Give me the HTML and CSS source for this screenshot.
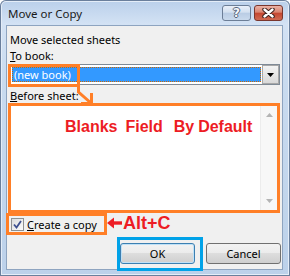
FILE: index.html
```html
<!DOCTYPE html>
<html lang="en">
<head>
    <meta charset="UTF-8">
    <title>Move or Copy</title>
    <link rel="stylesheet" href="styles.css">
</head>
<body>

<div class="window">
    <div class="titlebar">
        <span class="title">Move or Copy</span>
        <div class="caption-buttons">
            <span class="cap-btn help">?</span>
            <span class="cap-btn close">
                <svg width="13" height="10" viewBox="0 0 13 10">
                    <path d="M2.5 1.5 L10.5 8.5 M10.5 1.5 L2.5 8.5" stroke="#3a1f1b" stroke-width="4.4" stroke-linecap="round"/>
                    <path d="M2.5 1.5 L10.5 8.5 M10.5 1.5 L2.5 8.5" stroke="#ffffff" stroke-width="2.4" stroke-linecap="round"/>
                </svg>
            </span>
        </div>
    </div>

    <div class="client">
        <p class="label first">Move selected sheets</p>
        <p class="label"><u>T</u>o book:</p>

        <div class="combo">
            <div class="combo-value">
                <span class="selected">(new book)</span>
            </div>
            <div class="combo-arrow">
                <svg width="7" height="4" viewBox="0 0 7 4"><path d="M0 0 H7 L3.5 4 Z" fill="#000"/></svg>
            </div>
        </div>

        <p class="label before"><u>B</u>efore sheet:</p>

        <div class="listbox">
            <div class="list-items">
                <p class="note">Blanks <span class="w2">Field</span> <span class="w3">By</span> <span class="w4">Default</span></p>
            </div>
            <div class="scrollbar">
                <svg width="7" height="4" viewBox="0 0 7 4"><path d="M0 4 H7 L3.5 0 Z" fill="#b4b4b4"/></svg>
                <svg width="7" height="4" viewBox="0 0 7 4"><path d="M0 0 H7 L3.5 4 Z" fill="#b4b4b4"/></svg>
            </div>
        </div>

        <div class="check-row">
            <span class="checkbox">
                <svg width="11" height="11" viewBox="0 0 11 11">
                    <path d="M2 5.5 L4.5 8.5 L9 2" fill="none" stroke="#3d4f8f" stroke-width="1.8"/>
                </svg>
            </span>
            <span><u>C</u>reate a copy</span>
        </div>

        <div class="buttons">
            <button class="btn default">OK</button>
            <button class="btn">Cancel</button>
        </div>
    </div>

    <!-- annotations drawn over the dialog -->
    <div class="mark mark-book"></div>
    <svg class="mark-arrow" width="30" height="26" viewBox="70 84 30 26">
        <polyline points="78.5,86 78.5,92 91.5,103.5" fill="none" stroke="#ff7f27" stroke-width="3"/>
        <polyline points="91.5,93 91.5,103.5 81,103.5" fill="none" stroke="#ff7f27" stroke-width="3"/>
    </svg>
    <div class="mark mark-check"></div>
    <svg class="red-arrow" width="16" height="12" viewBox="0 0 16 12">
        <path d="M0 6 L7 0.5 V11.5 Z" fill="#ed1c24"/>
        <path d="M5 6 H15" stroke="#ed1c24" stroke-width="3.4"/>
    </svg>
    <span class="shortcut">Alt+C</span>
    <div class="mark-ok"></div>
</div>

</body>
</html>
```

FILE: styles.css
```css
body {
    margin: 0;
    font-family: "Noto Sans", "Liberation Sans", sans-serif;
    font-size: 11px;
    color: #000;
}

.window {
    position: relative;
    width: 290px;
    height: 276px;
    box-sizing: border-box;
    display: flex;
    flex-direction: column;
    background: linear-gradient(#b9cfea 0, #d3e2f4 24px, #c9dbef 80px, #bcd1ea 100%);
    border-radius: 6px 6px 0 0;
    box-shadow: inset 0 0 0 1px #6a7f9c, inset 0 0 0 2px #e4edf8;
}

.titlebar {
    height: 25px;
    flex-shrink: 0;
    display: flex;
    justify-content: space-between;
    align-items: flex-start;
    padding: 0 7px 0 8px;
    box-sizing: border-box;
}

.title {
    font-size: 11.5px;
    line-height: 14px;
    margin-top: 7px;
    color: #1a1a1a;
}

.caption-buttons {
    display: flex;
    gap: 3px;
    margin-top: 5px;
}

.cap-btn {
    width: 29px;
    height: 16px;
    box-sizing: border-box;
    border-radius: 3px;
    display: flex;
    align-items: center;
    justify-content: center;
}

.help {
    border: 1px solid #6c7e97;
    background: linear-gradient(#e9f0f9 0%, #d3e0f0 45%, #b9cce4 50%, #c9d9ec 100%);
    font-family: "DejaVu Sans", sans-serif;
    font-weight: bold;
    font-size: 12px;
    line-height: 14px;
    color: #f4f7fb;
    text-shadow: 1px 0 #55647a, -1px 0 #55647a, 0 1px #55647a, 0 -1px #55647a;
}

.close {
    border: 1px solid #7a362d;
    background: linear-gradient(#eab2a6 0%, #d9836f 45%, #c4452f 50%, #cf6a52 100%);
}

.client {
    flex: 1;
    margin: 0 7px 6px 6px;
    background: #f0f0f0;
    border: 1px solid #8ea4c0;
    display: flex;
    flex-direction: column;
}

.label {
    margin: 0 0 0 3px;
    line-height: 16px;
}

.label.first {
    margin-top: 6px;
}

.label.before {
    margin-top: 4px;
    line-height: 14px;
}

.combo {
    margin-left: 2px;
    width: 271px;
    height: 21px;
    box-sizing: border-box;
    border: 1px solid #7f8a96;
    background: #fff;
    display: flex;
}

.combo-value {
    flex: 1;
    padding: 2px 1px 2px 2px;
}

.selected {
    display: block;
    height: 15px;
    box-sizing: border-box;
    background: #3399ff;
    border: 1px dotted #cc6600;
    color: #fff;
    line-height: 13px;
    padding-left: 1px;
}

.combo-arrow {
    width: 17px;
    box-sizing: border-box;
    border: 1px solid #a7a7a7;
    background: linear-gradient(#f3f3f3, #d9d9d9);
    display: flex;
    align-items: center;
    justify-content: center;
}

.listbox {
    margin-left: 1px;
    width: 272px;
    height: 110px;
    box-sizing: border-box;
    border: 3px solid #ff7f27;
    background: #fff;
    display: flex;
}

.list-items {
    flex: 1;
    padding: 11px 0 0 54px;
}

.note {
    margin: 0;
    font-family: "Liberation Sans", sans-serif;
    font-weight: bold;
    font-size: 16px;
    line-height: 20px;
    color: #ed1c24;
    white-space: nowrap;
}

.note .w2 {
    margin-left: 3.5px;
}

.note .w3 {
    margin-left: 6.5px;
}

.note .w4 {
    margin-left: -0.5px;
}

.scrollbar {
    width: 16px;
    background: #f7f7f7;
    border-left: 1px solid #ececec;
    display: flex;
    flex-direction: column;
    justify-content: space-between;
    align-items: center;
    padding: 7px 0 7px;
}

.check-row {
    height: 22px;
    display: flex;
    align-items: center;
    gap: 3px;
    padding-left: 4px;
}

.checkbox {
    width: 13px;
    height: 13px;
    box-sizing: border-box;
    border: 1px solid #8e8f8f;
    background: linear-gradient(135deg, #dcdcdc, #fbfbfb);
    display: flex;
    align-items: center;
    justify-content: center;
}

.buttons {
    margin-top: 8px;
    display: flex;
    justify-content: flex-end;
    gap: 11px;
    padding-right: 1px;
}

.btn {
    width: 75px;
    height: 21px;
    padding: 0;
    border: 1px solid #707070;
    border-radius: 3px;
    background: linear-gradient(#f2f2f2 0%, #ebebeb 50%, #dddddd 50%, #cfcfcf 100%);
    font-family: "Noto Sans", "Liberation Sans", sans-serif;
    font-size: 11px;
    color: #000;
}

.btn.default {
    border-color: #3c7fb1;
    box-shadow: inset 0 0 0 1px #bfe1f7;
}

/* annotation layer */
.mark {
    position: absolute;
    box-sizing: border-box;
    border: 3px solid #ff7f27;
}

.mark-book {
    left: 8px;
    top: 64px;
    width: 72px;
    height: 23px;
}

.mark-check {
    left: 6px;
    top: 213px;
    width: 101px;
    height: 22px;
}

.mark-arrow {
    position: absolute;
    left: 70px;
    top: 84px;
}

.red-arrow {
    position: absolute;
    left: 107px;
    top: 217px;
}

.shortcut {
    position: absolute;
    left: 123px;
    top: 213px;
    font-family: "Liberation Sans", sans-serif;
    font-weight: bold;
    font-size: 18px;
    line-height: 20px;
    color: #ed1c24;
}

.mark-ok {
    position: absolute;
    left: 117px;
    top: 237px;
    width: 86px;
    height: 34px;
    box-sizing: border-box;
    border: 3px solid #00a2e8;
}
```
